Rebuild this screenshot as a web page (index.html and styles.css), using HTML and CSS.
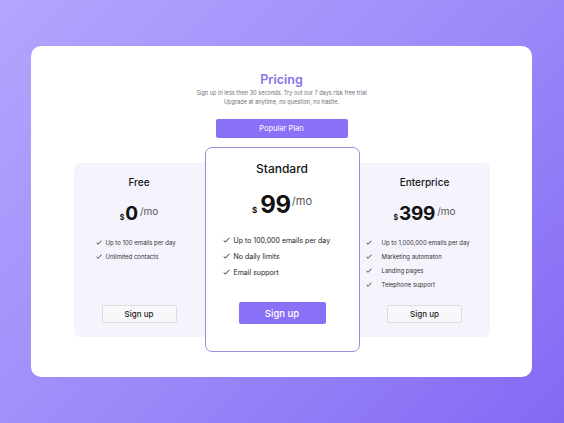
FILE: index.html
```html
<!DOCTYPE html>
<html>
<head>
<meta charset="utf-8">
<link rel="stylesheet" href="styles.css">
</head>
<body>
<div class="panel">
  <h1 class="title">Pricing</h1>
  <p class="sub">Sign up in less then 30 seconds. Try out our 7 days risk free trial<br>Upgrade at anytime, no question, no hastle.</p>
  <div class="popular">Popular Plan</div>
  <div class="plans">
    <div class="card side free">
      <div class="name">Free</div>
      <div class="price"><span class="cur">$</span><span class="amt">0</span><span class="per">/mo</span></div>
      <ul class="feats">
        <li><svg viewBox="0 0 10 8"><path d="M1 4.6 L3.6 7 L9 1"/></svg>Up to 100 emails per day</li>
        <li><svg viewBox="0 0 10 8"><path d="M1 4.6 L3.6 7 L9 1"/></svg>Unlimited contacts</li>
      </ul>
      <div class="btn light">Sign up</div>
    </div>
    <div class="card std">
      <div class="name">Standard</div>
      <div class="price"><span class="cur">$</span><span class="amt">99</span><span class="per">/mo</span></div>
      <ul class="feats">
        <li><svg viewBox="0 0 10 8"><path d="M1 4.6 L3.6 7 L9 1"/></svg>Up to 100,000 emails per day</li>
        <li><svg viewBox="0 0 10 8"><path d="M1 4.6 L3.6 7 L9 1"/></svg>No daily limits</li>
        <li><svg viewBox="0 0 10 8"><path d="M1 4.6 L3.6 7 L9 1"/></svg>Email support</li>
      </ul>
      <div class="btn primary">Sign up</div>
    </div>
    <div class="card side ent">
      <div class="name">Enterprice</div>
      <div class="price"><span class="cur">$</span><span class="amt">399</span><span class="per">/mo</span></div>
      <ul class="feats">
        <li><svg viewBox="0 0 10 8"><path d="M1 4.6 L3.6 7 L9 1"/></svg>Up to 1,000,000 emails per day</li>
        <li><svg viewBox="0 0 10 8"><path d="M1 4.6 L3.6 7 L9 1"/></svg>Marketing automaton</li>
        <li><svg viewBox="0 0 10 8"><path d="M1 4.6 L3.6 7 L9 1"/></svg>Landing pages</li>
        <li><svg viewBox="0 0 10 8"><path d="M1 4.6 L3.6 7 L9 1"/></svg>Telephone support</li>
      </ul>
      <div class="btn light">Sign up</div>
    </div>
  </div>
</div>
</body>
</html>
```
FILE: styles.css
```css
* { box-sizing: border-box; }
html, body { margin: 0; padding: 0; }
body {
  width: 564px;
  height: 423px;
  overflow: hidden;
  background: linear-gradient(135deg, #b2a6fe 0%, #9d8cf9 50%, #8468f4 100%);
  font-family: "Inter", "Noto Sans", sans-serif;
  color: #111;
  padding-top: 46px;
}
.panel {
  margin: 0 32px 0 31px;
  width: 501px;
  height: 331px;
  background: #fff;
  border-radius: 10px;
  display: flex;
  flex-direction: column;
  align-items: center;
  padding-top: 26px;
}
.title {
  margin: 0;
  font-size: 12.5px;
  font-weight: 600;
  color: #8a72ea;
  line-height: 16px;
}
.sub {
  margin: 1px 0 0;
  font-size: 5.6px;
  line-height: 9px;
  color: #6f6f78;
  text-align: center;
}
.popular {
  margin-top: 12px;
  width: 132px;
  height: 19px;
  background: #8a70f6;
  color: #fff;
  font-size: 7.5px;
  border-radius: 2px;
  display: flex;
  align-items: center;
  justify-content: center;
}
.plans {
  margin-top: 9px;
  display: flex;
  align-items: center;
}
.card {
  display: flex;
  flex-direction: column;
  align-items: center;
}
.side {
  background: #f5f4fd;
  height: 174px;
  border-radius: 6px;
  padding-top: 13px;
}
.free { width: 131px; border-top-right-radius: 0; border-bottom-right-radius: 0; }
.ent { width: 130px; border-top-left-radius: 0; border-bottom-left-radius: 0; }
.std {
  width: 155px;
  height: 205px;
  background: #fff;
  border: 1px solid #9b8fdc;
  border-radius: 7px;
  padding-top: 13px;
  position: relative;
  z-index: 1;
}
.name {
  font-size: 10px;
  font-weight: 500;
  line-height: 12px;
  color: #151515;
}
.std .name { font-size: 12px; line-height: 16px; }
.price {
  display: flex;
  align-items: baseline;
  margin-top: 16px;
  height: 20px;
}
.cur { font-size: 7px; font-weight: 700; margin-right: 1px; }
.amt { font-size: 19px; font-weight: 700; line-height: 20px; letter-spacing: -0.3px; }
.per { font-size: 10px; color: #555; margin-left: 2px; position: relative; top: -5px; }
.std .price { margin-top: 15px; height: 26px; }
.std .cur { font-size: 8px; margin-right: 3px; }
.std .amt { font-size: 24px; line-height: 26px; }
.std .per { font-size: 11px; top: -8px; margin-left: 1px; }
.feats {
  list-style: none;
  margin: 0;
  padding: 0;
  align-self: stretch;
  font-size: 6px;
  color: #333;
  flex: 1;
}
.feats li {
  display: flex;
  align-items: center;
  height: 14px;
}
.feats svg {
  width: 6px;
  height: 5px;
  fill: none;
  stroke: #222;
  stroke-width: 1.4;
  margin-right: 4px;
  flex: none;
}
.free .feats { padding: 12px 0 0 22px; }
.ent .feats { padding: 12px 0 0 6px; }
.ent .feats svg { margin-right: 10px; }
.std .feats { padding: 14px 0 0 17px; font-size: 7px; color: #222; }
.std .feats li { height: 16px; }
.std .feats svg { width: 7px; height: 6px; margin-right: 4px; }
.btn {
  display: flex;
  align-items: center;
  justify-content: center;
  border-radius: 2px;
}
.light {
  width: 75px;
  height: 18px;
  background: #f8f8fa;
  border: 1px solid #dcdce0;
  font-size: 8px;
  font-weight: 500;
  color: #222;
  margin-bottom: 14px;
}
.primary {
  width: 87px;
  height: 22px;
  background: #8a70f6;
  color: #fff;
  font-size: 9.5px;
  font-weight: 500;
  margin-bottom: 27px;
}
```
